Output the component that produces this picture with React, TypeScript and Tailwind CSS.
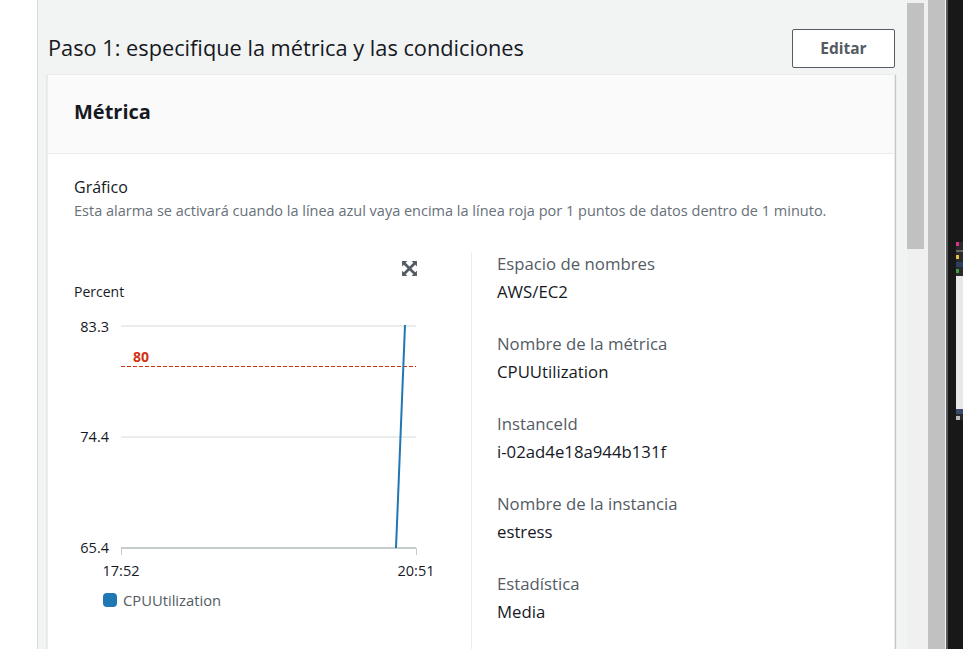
const details = [
  { label: "Espacio de nombres", value: "AWS/EC2" },
  { label: "Nombre de la métrica", value: "CPUUtilization" },
  { label: "InstanceId", value: "i-02ad4e18a944b131f" },
  { label: "Nombre de la instancia", value: "estress" },
  { label: "Estadística", value: "Media" },
]

function ExpandIcon() {
  return (
    <svg width="17" height="17" viewBox="0 0 16 16" fill="#545b64">
      <path d="M1 1h5L4.4 2.6 8 6.2 11.6 2.6 10 1h5v5l-1.6-1.6L9.8 8l3.6 3.6L15 10v5h-5l1.6-1.6L8 9.8l-3.6 3.6L6 15H1v-5l1.6 1.6L6.2 8 2.6 4.4 1 6z" />
    </svg>
  )
}

function Chart() {
  return (
    <svg width="370" height="275" className="block" style={{ fontFamily: "'Open Sans', sans-serif" }}>
      <line x1="47" y1="15" x2="342" y2="15" stroke="#eaeded" strokeWidth="2" />
      <line x1="47" y1="126" x2="342" y2="126" stroke="#eaeded" strokeWidth="2" />
      <line x1="47" y1="237" x2="342" y2="237" stroke="#c6cbcc" strokeWidth="2" />
      <line x1="47.5" y1="237" x2="47.5" y2="244" stroke="#c6cbcc" />
      <line x1="342.5" y1="237" x2="342.5" y2="244" stroke="#c6cbcc" />
      <line x1="47" y1="55.5" x2="342" y2="55.5" stroke="#d13212" strokeDasharray="4 2" />
      <text x="59" y="51" fontSize="14" fontWeight="700" fill="#d13212">80</text>
      <g fontSize="14.5" fill="#16191f" textAnchor="end">
        <text x="35" y="21">83.3</text>
        <text x="35" y="131">74.4</text>
        <text x="35" y="242">65.4</text>
      </g>
      <g fontSize="14.5" fill="#16191f" textAnchor="middle">
        <text x="47" y="265">17:52</text>
        <text x="342" y="265">20:51</text>
      </g>
      <line x1="322" y1="237" x2="331" y2="14" stroke="#1f77b4" strokeWidth="2" />
    </svg>
  )
}

export default function App() {
  return (
    <div className="flex w-[963px] h-[649px] overflow-hidden bg-white font-['Open_Sans',sans-serif] text-[#16191f]">
      <div className="w-[37px] shrink-0 bg-white" />

      <div className="w-[870px] shrink-0 border-l border-[#d5dbdb] bg-[#f2f3f3] pl-[9px] pr-[12px]">
        <div className="flex items-center justify-between pt-[29px] pl-[1px]">
          <h2 className="-mt-[2px] text-[21.75px] leading-[26px] font-normal">Paso 1: especifique la métrica y las condiciones</h2>
          <button className="h-[39px] w-[103px] rounded-[2px] border border-[#545b64] bg-white text-[15.5px] font-bold text-[#545b64]">
            Editar
          </button>
        </div>

        <div className="mt-[6px] border border-[#eaeded] bg-white shadow-[0_1px_1px_0_rgba(0,28,36,0.3),1px_1px_1px_0_rgba(0,28,36,0.15)]">
          <div className="flex h-[79px] items-center border-b border-[#eaeded] bg-[#fafafa] px-[26px] pb-[4px]">
            <h3 className="text-[20px] font-bold leading-[26px]">Métrica</h3>
          </div>

          <div className="px-[26px] pt-[22px]">
            <div className="text-[16px] leading-[22px]">Gráfico</div>
            <div className="mt-[3px] text-[14.5px] leading-[20px] text-[#687078]">
              Esta alarma se activará cuando la línea azul vaya encima la línea roja por 1 puntos de datos dentro de 1 minuto.
            </div>

            <div className="mt-[31px] grid grid-cols-[398px_1fr]">
              <div className="border-r border-[#eaeded] pb-[60px]">
                <div className="flex w-[344px] justify-end pt-[8px]">
                  <ExpandIcon />
                </div>
                <div className="mt-[6px] text-[14px] leading-[18px] text-[#16191f]">Percent</div>
                <div className="mt-[10px]">
                  <Chart />
                </div>
                <div className="mt-[4px] ml-[29px] flex items-center gap-[6px]">
                  <span className="h-[14px] w-[14px] rounded-[4px] bg-[#1f77b4]" />
                  <span className="text-[14.75px] leading-[20px] text-[#545b64]">CPUUtilization</span>
                </div>
              </div>

              <div className="flex flex-col gap-[28px] pl-[25px]">
                {details.map((d) => (
                  <div key={d.label}>
                    <div className="text-[16.75px] leading-[24px] text-[#545b64]">{d.label}</div>
                    <div className="mt-[4px] text-[16.75px] leading-[24px] text-[#16191f]">{d.value}</div>
                  </div>
                ))}
              </div>
            </div>
          </div>
        </div>
      </div>

      <div className="w-[17px] shrink-0 bg-[#f0f0f0] pt-[3px]">
        <div className="h-[246px] bg-[#c1c1c1]" />
      </div>
      <div className="w-[4px] shrink-0 bg-[#f0f0f0]" />
      <div className="w-[17px] shrink-0 bg-[#c1c1c1]" />
      <div className="w-[1px] shrink-0 bg-[#f5f5f5]" />
      <div className="w-[2px] shrink-0 bg-[#5a5a5a]" />
      <div className="flex-1 bg-[#181818] pt-[242px] pl-[8px]">
        <div className="flex h-[178px] flex-col bg-[#2a2a2a]">
          <div className="h-[4px] w-[3px] bg-[#d63384]" />
          <div className="mt-[4px] h-[2px] bg-[#666]" />
          <div className="mt-[3px] h-[4px] w-[3px] bg-[#e0c040]" />
          <div className="mt-[3px] h-[5px] bg-[#2c3e60]" />
          <div className="mt-[2px] h-[4px] w-[3px] bg-[#40a040]" />
          <div className="mt-[3px] flex-1 bg-[#e8e8e8]" />
          <div className="h-[5px] bg-[#3a4a6a]" />
          <div className="mt-[2px] h-[4px] w-[4px] bg-[#bbb]" />
        </div>
      </div>
    </div>
  )
}
